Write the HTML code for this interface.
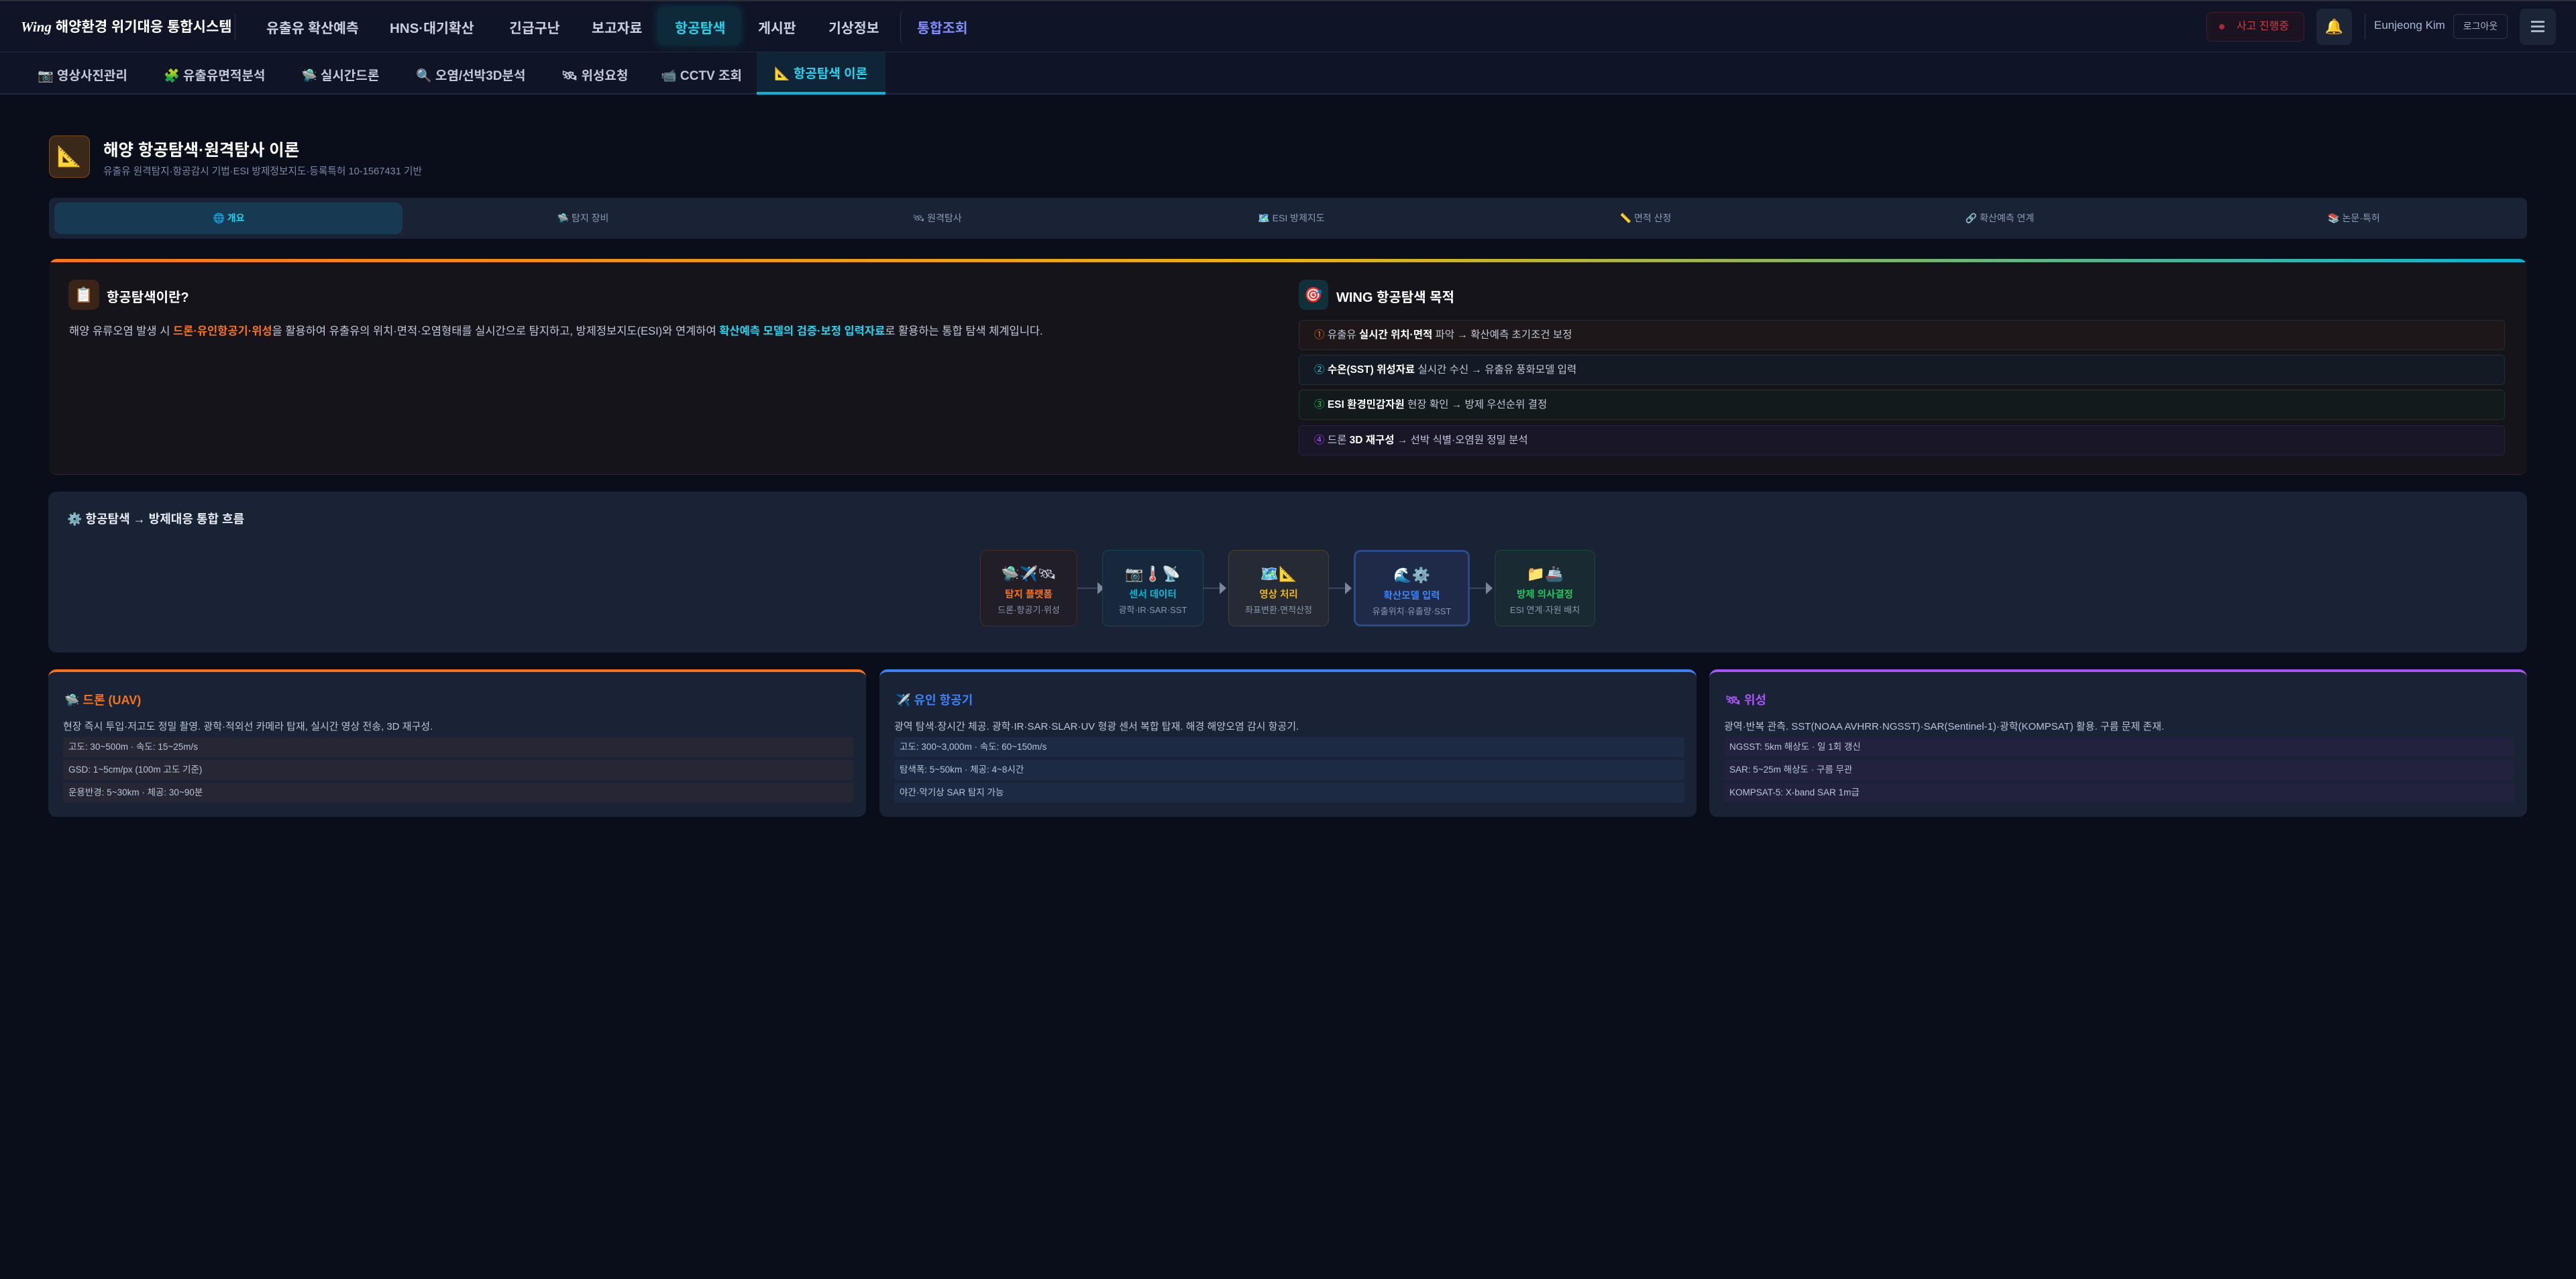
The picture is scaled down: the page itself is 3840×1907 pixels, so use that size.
<!DOCTYPE html>
<html><head><meta charset="utf-8">
<style>
*{margin:0;padding:0;box-sizing:border-box}
body{width:3840px;height:1907px;background:#0a0e1a;font-family:"Liberation Sans","Noto Sans CJK KR",sans-serif;color:#c8d0e0;position:relative;overflow:hidden}
.a{position:absolute;white-space:nowrap}
.top{position:absolute;left:0;top:0;width:3840px;height:78px;background:#0f1526;border-top:2px solid #2a2e38;border-bottom:1px solid #1e2a40}
.sub{position:absolute;left:0;top:78px;width:3840px;height:63px;background:#0f1526;border-bottom:2px solid #1c2740}
.nav{font-size:20.5px;font-weight:700;color:#c8d0e0;top:25px}
.sn{font-size:19px;font-weight:700;color:#c0c8d8;top:98px}
.tab{position:absolute;top:302px;height:47px;width:520px;text-align:center;line-height:47px;font-size:14px;color:#8a9ab8}
.item{position:absolute;left:1936px;width:1798px;height:45px;border-radius:6px;border:1px solid;font-size:15.5px;line-height:43px;padding-left:22px;color:#c0c8d8}
.fb{position:absolute;top:820px;height:114px;border-radius:10px;border:1px solid;text-align:center}
.fb .ic{margin-top:22px;font-size:22px;line-height:26px}
.fb .t{font-size:14.5px;font-weight:700;margin-top:6px}
.fb .s{font-size:13px;color:#8a96ae;margin-top:3px}
.arr{position:absolute;top:876px;height:2px;background:#3a4660}
.tri{position:absolute;top:868px;width:0;height:0;border-left:10px solid #7a869e;border-top:9px solid transparent;border-bottom:9px solid transparent}
.card{position:absolute;top:998px;height:220px;background:#1a2235;border-radius:12px;border-top:4px solid}
.card .h{position:absolute;left:24px;top:28px;font-size:18px;font-weight:700}
.card .d{position:absolute;left:22px;top:70px;font-size:15px;color:#b8c4d8}
.card .r{position:absolute;left:22px;width:1178px;height:30px;border-radius:4px;font-size:13.5px;line-height:30px;padding-left:8px;color:#b8c4d8}
</style></head><body>

<div class="top"></div>
<div class="a" style="left:31px;top:24px;font-size:21px;font-weight:700;color:#fff"><span style="font-family:'Liberation Serif',serif;font-style:italic">Wing</span> 해양환경 위기대응 통합시스템</div>
<div class="a" style="left:350px;top:20px;width:1px;height:40px;background:#2a3550"></div>
<div class="a nav" style="left:397px">유출유 확산예측</div>
<div class="a nav" style="left:581px">HNS·대기확산</div>
<div class="a nav" style="left:759px">긴급구난</div>
<div class="a nav" style="left:882px">보고자료</div>
<div class="a" style="left:980px;top:10px;width:124px;height:57px;background:#0e2a3a;border-radius:10px;box-shadow:0 0 12px #0b3a4a"></div>
<div class="a nav" style="left:1006px;color:#22d3ee">항공탐색</div>
<div class="a nav" style="left:1130px">게시판</div>
<div class="a nav" style="left:1235px">기상정보</div>
<div class="a" style="left:1342px;top:13px;width:20px;height:54px;border-left:1px solid #2a3550;border-radius:10px"></div>
<div class="a nav" style="left:1367px;color:#818cf8">통합조회</div>

<div class="a" style="left:3289px;top:18px;width:146px;height:44px;border:1px solid #4a1c24;background:#1c1320;border-radius:8px;color:#d03a48;font-size:16px;line-height:42px;padding-left:44px"><span style="position:absolute;left:18px;top:17px;width:8px;height:8px;border-radius:50%;background:#a82a38"></span>사고 진행중</div>
<div class="a" style="left:3453px;top:13px;width:53px;height:54px;background:#1c2438;border-radius:8px;text-align:center;line-height:54px;font-size:22px">🔔</div>
<div class="a" style="left:3525px;top:20px;width:1px;height:38px;background:#2a3550"></div>
<div class="a" style="left:3539px;top:28px;font-size:17px;color:#a8b8d8">Eunjeong Kim</div>
<div class="a" style="left:3657px;top:21px;width:81px;height:37px;border:1px solid #2a3550;border-radius:6px;font-size:14px;color:#a8b4c8;text-align:center;line-height:35px">로그아웃</div>
<div class="a" style="left:3756px;top:13px;width:54px;height:54px;background:#1c2438;border-radius:8px"><div style="position:absolute;left:17px;top:18px;width:20px;height:3px;background:#a8b4c8;box-shadow:0 7px 0 #a8b4c8,0 14px 0 #a8b4c8"></div></div>

<div class="sub"></div>
<div class="a sn" style="left:56px">📷 영상사진관리</div>
<div class="a sn" style="left:244px">🧩 유출유면적분석</div>
<div class="a sn" style="left:449px">🛸 실시간드론</div>
<div class="a sn" style="left:620px">🔍 오염/선박3D분석</div>
<div class="a sn" style="left:837px">🛰 위성요청</div>
<div class="a sn" style="left:985px">📹 CCTV 조회</div>
<div class="a" style="left:1128px;top:78px;width:192px;height:63px;background:#0f2436;border-bottom:4px solid #06b6d4"></div>
<div class="a sn" style="left:1154px;top:95px;color:#22d3ee">📐 항공탐색 이론</div>

<div class="a" style="left:73px;top:202px;width:61px;height:63px;background:#3a2818;border:1px solid #7a4a1a;border-radius:10px;text-align:center;line-height:61px;font-size:30px">📐</div>
<div class="a" style="left:154px;top:205px;font-size:24.5px;font-weight:700;color:#fff">해양 항공탐색·원격탐사 이론</div>
<div class="a" style="left:154px;top:244px;font-size:14.7px;color:#7a8aa8">유출유 원격탐지·항공감시 기법·ESI 방제정보지도·등록특허 10-1567431 기반</div>

<div class="a" style="left:73px;top:295px;width:3694px;height:61px;background:#1a2235;border-radius:8px"></div>
<div class="a" style="left:81px;top:302px;width:519px;height:47px;background:#173a52;border-radius:10px"></div>
<div class="tab" style="left:81px;color:#22d3ee;font-weight:700">🌐 개요</div>
<div class="tab" style="left:609px">🛸 탐지 장비</div>
<div class="tab" style="left:1137px">🛰 원격탐사</div>
<div class="tab" style="left:1665px">🗺️ ESI 방제지도</div>
<div class="tab" style="left:2193px">📏 면적 산정</div>
<div class="tab" style="left:2721px">🔗 확산예측 연계</div>
<div class="tab" style="left:3249px">📚 논문·특허</div>

<div class="a" style="left:73px;top:386px;width:3694px;height:322px;background:#15141b;border-radius:12px;border-bottom:1px solid #3a2418;overflow:hidden"><div style="height:5px;background:linear-gradient(90deg,#f97316,#eab308 50%,#06b6d4)"></div></div>
<div class="a" style="left:102px;top:417px;width:46px;height:45px;background:#3a2418;border-radius:10px;text-align:center;line-height:45px;font-size:22px">📋</div>
<div class="a" style="left:159px;top:427px;font-size:20px;font-weight:700;color:#fff">항공탐색이란?</div>
<div class="a" style="left:103px;top:480px;font-size:16.5px;color:#c0c8d8">해양 유류오염 발생 시 <b style="color:#f97316">드론·유인항공기·위성</b>을 활용하여 유출유의 위치·면적·오염형태를 실시간으로 탐지하고, 방제정보지도(ESI)와 연계하여 <b style="color:#22d3ee">확산예측 모델의 검증·보정 입력자료</b>로 활용하는 통합 탐색 체계입니다.</div>

<div class="a" style="left:1936px;top:417px;width:44px;height:45px;background:#10303a;border-radius:10px;text-align:center;line-height:45px;font-size:22px">🎯</div>
<div class="a" style="left:1992px;top:427px;font-size:20px;font-weight:700;color:#fff">WING 항공탐색 목적</div>
<div class="item" style="top:477px;background:#1d1719;border-color:#3a2620"><span style="color:#f97316">①</span> 유출유 <b style="color:#fff">실시간 위치·면적</b> 파악 → 확산예측 초기조건 보정</div>
<div class="item" style="top:529px;background:#131a23;border-color:#163440"><span style="color:#22d3ee">②</span> <b style="color:#fff">수온(SST) 위성자료</b> 실시간 수신 → 유출유 풍화모델 입력</div>
<div class="item" style="top:581px;background:#121a1b;border-color:#173a2a"><span style="color:#22c55e">③</span> <b style="color:#fff">ESI 환경민감자원</b> 현장 확인 → 방제 우선순위 결정</div>
<div class="item" style="top:634px;background:#181627;border-color:#2a2042"><span style="color:#a855f7">④</span> 드론 <b style="color:#fff">3D 재구성</b> → 선박 식별·오염원 정밀 분석</div>

<div class="a" style="left:72px;top:733px;width:3695px;height:240px;background:#1a2235;border-radius:12px"></div>
<div class="a" style="left:100px;top:760px;font-size:18px;font-weight:700;color:#e8ecf4">⚙️ 항공탐색 → 방제대응 통합 흐름</div>

<div class="fb" style="left:1461px;width:145px;background:#221e28;border-color:#4a2c24"><div class="ic">🛸✈️🛰</div><div class="t" style="color:#f97316">탐지 플랫폼</div><div class="s">드론·항공기·위성</div></div>
<div class="arr" style="left:1606px;width:30px"></div><div class="tri" style="left:1636px"></div>
<div class="fb" style="left:1643px;width:151px;background:#17283d;border-color:#164656"><div class="ic">📷🌡️📡</div><div class="t" style="color:#06b6d4">센서 데이터</div><div class="s">광학·IR·SAR·SST</div></div>
<div class="arr" style="left:1794px;width:24px"></div><div class="tri" style="left:1818px"></div>
<div class="fb" style="left:1831px;width:150px;background:#262a34;border-color:#4a4224"><div class="ic">🗺️📐</div><div class="t" style="color:#eab308">영상 처리</div><div class="s">좌표변환·면적산정</div></div>
<div class="arr" style="left:1981px;width:24px"></div><div class="tri" style="left:2005px"></div>
<div class="fb" style="left:2018px;width:173px;background:#1e2a48;border:3px solid #2a4a8a"><div class="ic">🌊⚙️</div><div class="t" style="color:#3b82f6">확산모델 입력</div><div class="s">유출위치·유출량·SST</div></div>
<div class="arr" style="left:2191px;width:24px"></div><div class="tri" style="left:2215px"></div>
<div class="fb" style="left:2228px;width:150px;background:#1a2a32;border-color:#1a4a38"><div class="ic">📁🚢</div><div class="t" style="color:#22c55e">방제 의사결정</div><div class="s">ESI 연계·자원 배치</div></div>

<div class="card" style="left:72px;width:1219px;border-color:#f97316">
<div class="h" style="color:#f97316">🛸 드론 (UAV)</div>
<div class="d">현장 즉시 투입·저고도 정밀 촬영. 광학·적외선 카메라 탑재, 실시간 영상 전송, 3D 재구성.</div>
<div class="r" style="top:97px;background:#262634">고도: 30~500m · 속도: 15~25m/s</div>
<div class="r" style="top:131px;background:#262634">GSD: 1~5cm/px (100m 고도 기준)</div>
<div class="r" style="top:165px;background:#262634">운용반경: 5~30km · 체공: 30~90분</div>
</div>
<div class="card" style="left:1311px;width:1218px;border-color:#3b82f6">
<div class="h" style="color:#3b82f6">✈️ 유인 항공기</div>
<div class="d">광역 탐색·장시간 체공. 광학·IR·SAR·SLAR·UV 형광 센서 복합 탑재. 해경 해양오염 감시 항공기.</div>
<div class="r" style="top:97px;background:#1c2a44">고도: 300~3,000m · 속도: 60~150m/s</div>
<div class="r" style="top:131px;background:#1c2a44">탐색폭: 5~50km · 체공: 4~8시간</div>
<div class="r" style="top:165px;background:#1c2a44">야간·악기상 SAR 탐지 가능</div>
</div>
<div class="card" style="left:2548px;width:1219px;border-color:#a855f7">
<div class="h" style="color:#a855f7">🛰 위성</div>
<div class="d">광역·반복 관측. SST(NOAA AVHRR·NGSST)·SAR(Sentinel-1)·광학(KOMPSAT) 활용. 구름 문제 존재.</div>
<div class="r" style="top:97px;background:#22223e">NGSST: 5km 해상도 · 일 1회 갱신</div>
<div class="r" style="top:131px;background:#22223e">SAR: 5~25m 해상도 · 구름 무관</div>
<div class="r" style="top:165px;background:#22223e">KOMPSAT-5: X-band SAR 1m급</div>
</div>
</body></html>
